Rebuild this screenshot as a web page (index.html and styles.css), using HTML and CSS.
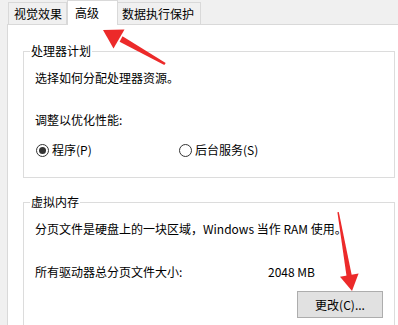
FILE: index.html
```html
<!DOCTYPE html>
<html lang="zh-CN">
<head>
<meta charset="utf-8">
<title>性能选项 - 高级</title>
<link rel="stylesheet" href="styles.css">
</head>
<body>
<div class="window">
  <div class="tabs">
    <div class="tab t1">视觉效果</div>
    <div class="tab active">高级</div>
    <div class="tab t3">数据执行保护</div>
  </div>
  <div class="panel">
    <fieldset class="group g1">
      <legend>处理器计划</legend>
      <p class="line l1">选择如何分配处理器资源。</p>
      <p class="line l2">调整以优化性能:</p>
      <div class="radios">
        <label class="radio first"><span class="dot checked"></span>程序(P)</label>
        <label class="radio"><span class="dot"></span>后台服务(S)</label>
      </div>
    </fieldset>
    <fieldset class="group g2">
      <legend>虚拟内存</legend>
      <p class="line l1">分页文件是硬盘上的一块区域，Windows 当作 RAM 使用。</p>
      <div class="size-row">
        <span>所有驱动器总分页文件大小:</span>
        <span>2048 MB</span>
      </div>
      <div class="btn-row">
        <button class="btn" type="button">更改(C)...</button>
      </div>
    </fieldset>
  </div>
  <svg class="arrows" width="398" height="325" viewBox="0 0 398 325">
    <polygon fill="#ec2a2a" points="165.7,62.9 164.3,65.1 119.6,41.8 122.5,36.2"/>
    <polygon fill="#ec2a2a" points="103,30 124.5,29.5 113.5,48.5"/>
    <polygon fill="#ec2a2a" points="338.8,212 337.4,212.3 346.6,276.5 351.8,275.6"/>
    <polygon fill="#ec2a2a" points="352,291 358.6,273.5 340.0,276.7"/>
  </svg>
</div>
</body>
</html>
```

FILE: styles.css
```css
html, body {
  margin: 0;
  padding: 0;
}
body {
  background: #f0f0f0;
  font-family: "Noto Sans CJK SC", "Noto Sans", sans-serif;
  font-size: 12px;
  line-height: 16px;
  color: #000;
  width: 398px;
  height: 325px;
  overflow: hidden;
}
.window {
  position: relative;
  width: 398px;
  height: 325px;
}
.tabs {
  display: flex;
  align-items: flex-end;
  height: 24px;
  padding-left: 8px;
}
.tab {
  box-sizing: border-box;
  height: 22px;
  padding-top: 3px;
  border: 1px solid #d9d9d9;
  border-bottom: none;
  background: #f0f0f0;
  white-space: nowrap;
}
.t1 {
  width: 59px;
  padding-left: 5px;
}
.active {
  position: relative;
  z-index: 1;
  width: 51px;
  height: 25px;
  margin-bottom: -1px;
  padding-top: 4px;
  padding-left: 7px;
  background: #fff;
  border-color: #d9d9d9;
}
.t3 {
  width: 83px;
  padding-left: 4px;
  border-left: none;
}
.panel {
  background: #fff;
  border-top: 1px solid #d9d9d9;
  border-left: 1px solid #d9d9d9;
  margin-left: 7px;
  height: 300px;
  overflow: hidden;
}
.group {
  margin: 0 3px 0 15px;
  padding: 0 11px 0 11px;
  border: 1px solid #dcdcdc;
  min-width: 0;
}
.group legend {
  margin-left: -5px;
  padding: 0 1px;
  line-height: 16px;
}
.line {
  margin: 0;
  height: 16px;
  white-space: nowrap;
}
.g1 {
  margin-top: 18px;
  padding-bottom: 19px;
}
.g1 .l1 {
  margin-top: 11px;
}
.g1 .l2 {
  margin-top: 26px;
}
.radios {
  display: flex;
  margin-top: 14px;
  padding-left: 1px;
  height: 16px;
}
.radio {
  display: flex;
  align-items: center;
  gap: 3px;
  white-space: nowrap;
}
.radio.first {
  width: 143px;
}
.dot {
  box-sizing: border-box;
  width: 13px;
  height: 13px;
  border: 1px solid #333;
  border-radius: 50%;
  display: flex;
  align-items: center;
  justify-content: center;
  flex: none;
}
.dot.checked::after {
  content: "";
  width: 7px;
  height: 7px;
  border-radius: 50%;
  background: #333;
}
.g2 {
  margin-top: 16px;
  padding-bottom: 40px;
}
.g2 .l1 {
  margin-top: 11px;
}
.size-row {
  display: grid;
  grid-template-columns: 233px auto;
  margin-top: 27px;
  height: 16px;
  white-space: nowrap;
}
.btn-row {
  display: flex;
  justify-content: flex-end;
  margin-top: 11px;
}
.btn {
  box-sizing: border-box;
  width: 86px;
  height: 27px;
  margin: 0;
  padding: 0;
  background: #e1e1e1;
  border: 1px solid #adadad;
  border-radius: 0;
  font: inherit;
  color: #000;
}
.arrows {
  position: absolute;
  left: 0;
  top: 0;
  pointer-events: none;
}
```
